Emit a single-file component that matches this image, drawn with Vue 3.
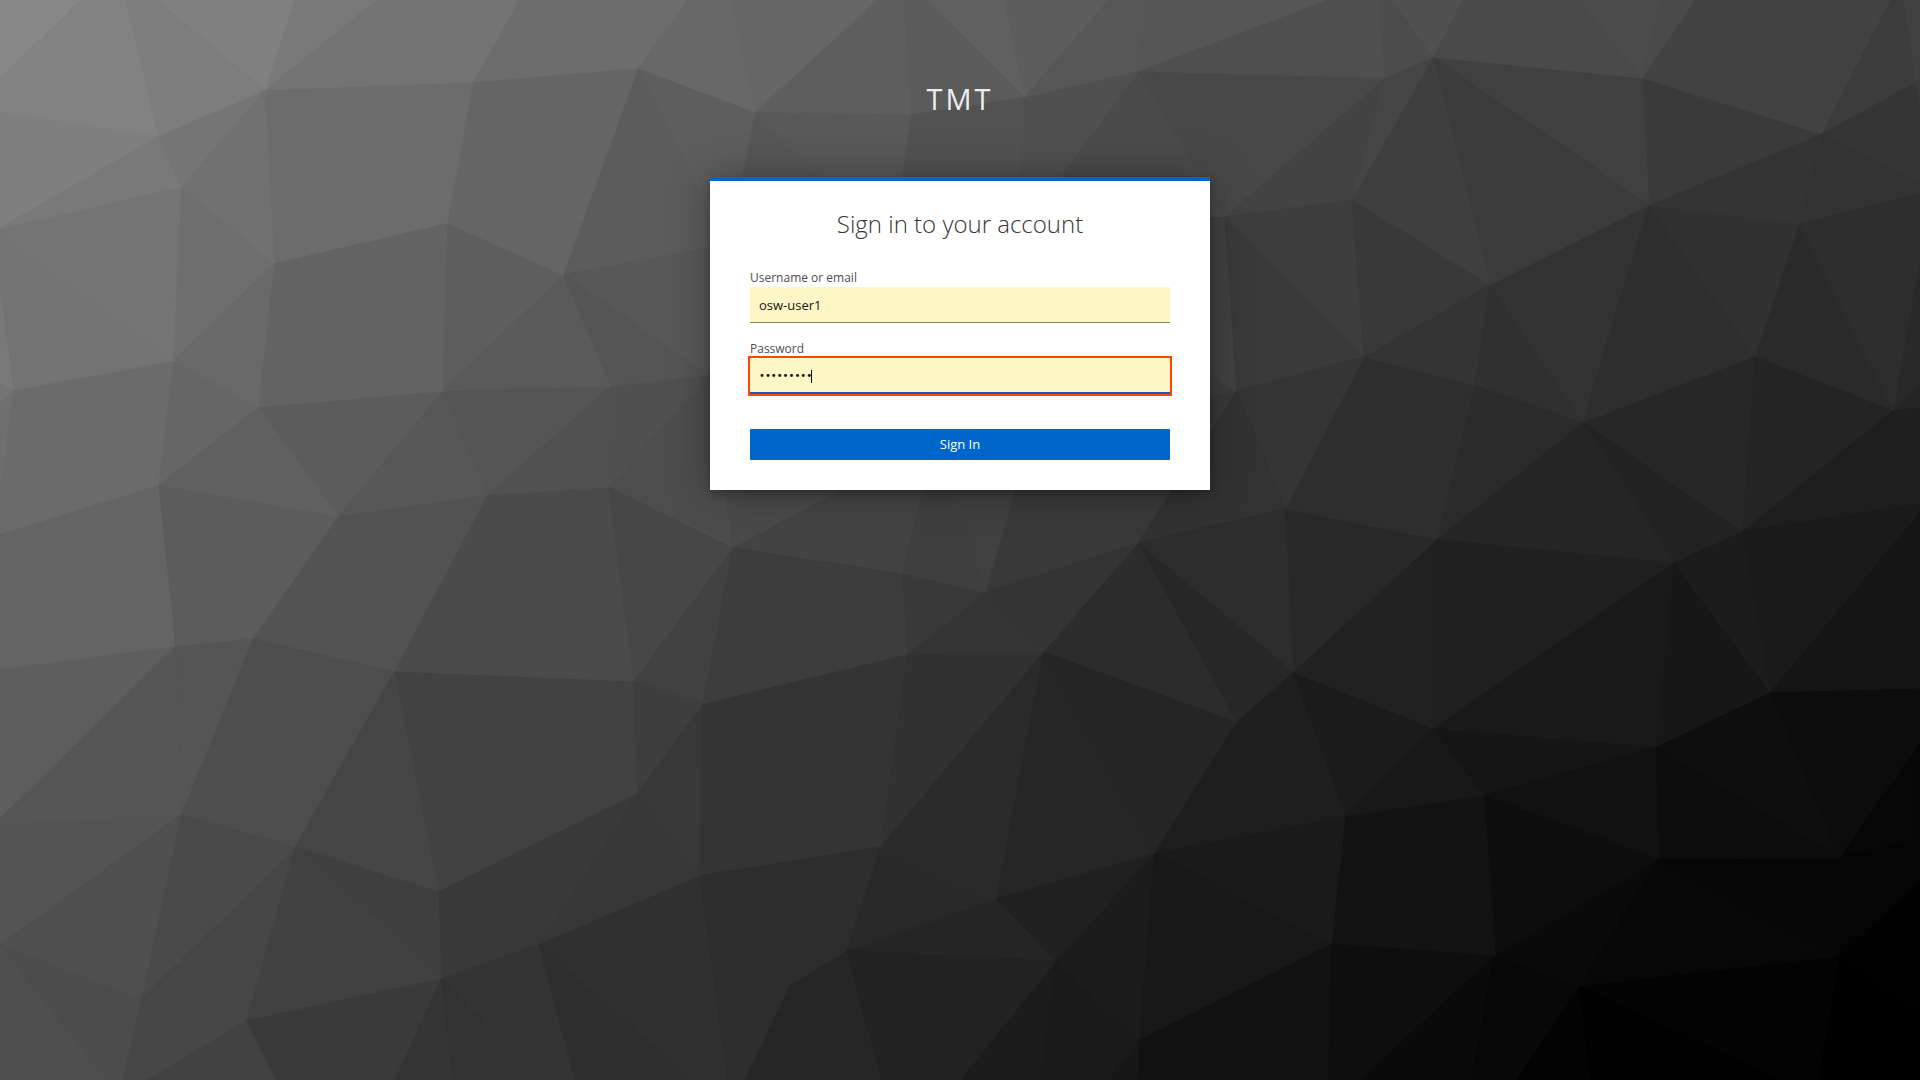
<script setup>
import { ref } from 'vue'

const username = ref('osw-user1')
const password = ref('password1')

// Inner corners of the low-poly backdrop
const nodes = {
  a: [265, 90], b: [158, 136], c: [181, 187], d: [473, 82], e: [274, 263], f: [447, 223],
  g: [563, 275], h: [638, 68], i: [14, 390], j: [173, 361], k: [258, 407], m: [442, 391],
  n: [610, 386], o: [158, 485], p: [338, 516], q: [487, 495], r: [608, 487], s: [175, 646],
  u: [253, 638], v: [394, 671], w: [633, 681], x: [181, 814], y: [295, 846], z: [438, 891],
  aa: [637, 793], ab: [141, 999], ac: [246, 1020], ad: [441, 978], ae: [538, 944],
  ag: [732, 548], ah: [699, 876], ai: [702, 704], aj: [902, 574], ak: [907, 654],
  al: [985, 593], am: [1043, 652], an: [1138, 543], ao: [1236, 722], ap: [880, 847],
  aq: [996, 898], ar: [1154, 853], as: [846, 951], at: [790, 985], au: [1056, 961],
  av: [1139, 1039],
  b1: [1293, 672], c1: [1345, 816], d1: [1331, 943], e1: [1385, 78], f1: [1433, 57],
  g1: [1642, 78], h1: [1821, 134], i1: [1352, 199], j1: [1649, 205], k1: [1490, 285],
  l1: [1799, 224], m1: [1364, 357], n1: [1475, 385], o1: [1583, 422], p1: [1755, 356],
  q1: [1893, 410], r1: [1285, 509], s1: [1437, 539], t1: [1742, 531], u1: [1915, 82],
  v1: [1674, 562], w1: [1770, 692], x1: [1433, 728], y1: [1655, 747], z1: [1484, 795],
  a2: [1659, 859], b2: [1839, 858], c2: [1495, 955], d2: [1580, 986], e2: [1839, 956],
  f2: [755, 112], g2: [911, 114], h2: [1024, 97], i2: [1138, 71], j2: [1225, 216],
  k2: [1237, 391],
  h3: [727, 245], i3: [890, 250], j3: [1019, 233], k3: [1100, 300], l3: [1033, 430],
  m3: [936, 439], n3: [709, 375],
}

// Each facet: its corners and its grey level. T, R, B and L name a point on an outer edge.
const facets = [
  ['T0 T81 L77', 0x88], ['T81 T125 b L112 L77', 0x82], ['T125 T156 a b', 0x7d],
  ['T156 T294 a', 0x80], ['T294 T376 a', 0x79], ['T376 T519 d a', 0x73],
  ['T519 T687 h d', 0x6d], ['L112 b L227', 0x7f], ['L227 b c L229', 0x79],
  ['b a c', 0x75], ['c a e', 0x71], ['a d f e', 0x6c], ['d h g f', 0x65],
  ['L229 c j L237', 0x74], ['L237 j i L284', 0x73], ['L284 i L383', 0x79],
  ['L383 i L402', 0x74], ['L402 i L487', 0x6f], ['c e j', 0x6e], ['j e k', 0x69],
  ['e f m k', 0x63], ['f g m', 0x5e], ['g n m', 0x5a], ['g n3 n', 0x55],
  ['g h3 n3', 0x58], ['i j o L534 L487', 0x6b], ['j k o', 0x66], ['o k p', 0x60],
  ['k m p', 0x5c], ['m q p', 0x57], ['m n q', 0x55], ['n r q', 0x51], ['n n3 r', 0x50],
  ['L534 o s L669', 0x64], ['o p u s', 0x5c], ['p v u', 0x53], ['p q v', 0x52],
  ['q r w v', 0x4b], ['r ag w', 0x47], ['L669 s L818', 0x5e], ['L818 s x L825', 0x56],
  ['s u x', 0x55], ['u y x', 0x4e], ['u v y', 0x4d], ['v z y', 0x45], ['v w aa', 0x42],
  ['v aa z', 0x41], ['w ai aa', 0x3e], ['w ag ai', 0x41], ['L825 x L944', 0x54],
  ['L944 x ab', 0x4f], ['x y ab', 0x4a], ['y ac ab', 0x46], ['y ad ac', 0x41],
  ['y z ad', 0x3f], ['z aa ae ad', 0x39], ['aa ah ae', 0x37], ['aa ai ah', 0x38],
  ['L944 ab B122 B107', 0x4c], ['L944 B107 B0', 0x4e], ['ab ac B146 B122', 0x47],
  ['ac B276 B146', 0x41], ['ac ad B394 B276', 0x3a], ['ad B452 B394', 0x35],
  ['ad B545 B452', 0x32], ['ad ae B574 B545', 0x34], ['ae B692 B574', 0x2e],
  ['ae ah B727 B692', 0x30], ['ah ap as at B744 B727', 0x2d], ['at as B881 B744', 0x26],
  ['as au B960 B881', 0x22], ['ag aj ak ai', 0x3d], ['ai ak ap ah', 0x34],
  ['aj al ak', 0x39], ['ak al am', 0x35], ['al an am', 0x34], ['ak am ap', 0x31],
  ['am aq ap', 0x2a], ['ap aq as', 0x29], ['am ar aq', 0x26], ['am ao ar', 0x25],
  ['an ao am', 0x2c], ['an b1 ao', 0x27], ['ao b1 c1', 0x1f], ['ao c1 ar', 0x1e],
  ['aq ar au', 0x20], ['aq au as', 0x25], ['ar av au', 0x1c], ['ar c1 d1', 0x1a],
  ['ar d1 av', 0x18], ['au B1040 B960', 0x1c], ['au av B1109 B1040', 0x1a],
  ['av B1138 B1109', 0x17], ['av d1 B1328 B1138', 0x12], ['an r1 b1', 0x2d],
  ['k2 r1 an', 0x32], ['k2 m1 r1', 0x35],
  ['T1147 T1327 i2', 0x56], ['T1327 T1379 e1 i2', 0x4f], ['T1379 T1391 f1 e1', 0x4c],
  ['T1391 T1462 f1', 0x50], ['T1462 T1577 g1 f1', 0x4a], ['T1577 T1660 g1', 0x4c],
  ['T1660 T1695 g1', 0x4a], ['T1695 T1890 h1 g1', 0x42], ['T1890 T1903 u1 h1', 0x3c],
  ['T1903 T1920 R78 u1', 0x40], ['u1 R78 R106', 0x3b], ['h1 u1 R106 R182', 0x35],
  ['h1 R182 R193 l1', 0x32], ['l1 R193 R262 q1', 0x2d], ['q1 R262 R384', 0x29],
  ['q1 R384 R407', 0x25], ['q1 R407 R486', 0x1f], ['i2 e1 j2', 0x48], ['e1 i1 j2', 0x43],
  ['e1 f1 i1', 0x45], ['f1 k1 i1', 0x3f], ['f1 j1 k1', 0x3b], ['f1 g1 j1', 0x40],
  ['g1 h1 j1', 0x3a], ['j1 h1 l1', 0x34], ['j1 l1 p1', 0x31], ['j1 p1 o1', 0x2e],
  ['l1 q1 p1', 0x2a], ['k1 j1 o1', 0x32], ['k1 o1 n1', 0x30], ['m1 k1 n1', 0x34],
  ['i1 k1 m1', 0x39], ['j2 i1 m1', 0x3e], ['j2 m1 k2', 0x3a], ['m1 n1 s1 r1', 0x2e],
  ['n1 o1 s1', 0x2b], ['o1 p1 t1', 0x27], ['p1 q1 t1', 0x24], ['t1 q1 R486 R503', 0x1e],
  ['r1 s1 b1', 0x28], ['s1 o1 v1', 0x25], ['o1 t1 v1', 0x22], ['t1 w1 v1', 0x1c],
  ['t1 R503 R511 w1', 0x1a], ['w1 R511 R688', 0x15], ['s1 v1 x1', 0x20],
  ['s1 x1 b1', 0x21], ['v1 y1 x1', 0x19], ['v1 w1 y1', 0x17], ['x1 y1 z1', 0x15],
  ['x1 z1 c1', 0x18], ['b1 x1 c1', 0x1b], ['c1 z1 c2 d1', 0x13], ['z1 y1 a2', 0x11],
  ['z1 a2 c2', 0x0d], ['y1 b2 a2', 0x0c], ['y1 w1 b2', 0x0e], ['w1 R688 R742 b2', 0x0c],
  ['b2 R742 R838', 0x07], ['b2 R838 R880 e2', 0x04], ['a2 b2 e2', 0x06],
  ['a2 e2 d2', 0x07], ['a2 d2 c2', 0x0a], ['d2 e2 B1818 B1782', 0x03],
  ['d2 B1782 B1591', 0x01], ['e2 R880 R1015', 0x01], ['e2 R1015 B1920 B1818', 0x00],
  ['c2 d2 B1516 B1472', 0x08], ['c2 B1472 B1361', 0x0a], ['d1 c2 B1361 B1328', 0x0e],
  ['d2 B1591 B1516', 0x03],
  ['T687 T732 f2 h', 0x68], ['T732 T877 f2', 0x66], ['T877 T904 g2 f2', 0x5e],
  ['T904 T926 h2 g2', 0x5b], ['T926 T1004 h2', 0x60], ['T1004 T1108 h2', 0x5d],
  ['T1108 T1147 i2 h2', 0x57], ['h f2 h3', 0x5e], ['h h3 g', 0x5c], ['f2 g2 i3', 0x59],
  ['f2 i3 h3', 0x57], ['g2 h2 j3 i3', 0x52], ['h2 i2 j3', 0x50], ['i2 j2 j3', 0x4b],
  ['j3 j2 k2 k3', 0x41], ['k3 k2 l3', 0x3d], ['n3 ag r', 0x4d], ['n3 m3 ag', 0x49],
  ['ag m3 aj', 0x43], ['m3 al aj', 0x3f], ['m3 l3 al', 0x40], ['l3 k2 an al', 0x39],
]

const edges = {
  T: (n) => [n, 0],
  B: (n) => [n, 1080],
  L: (n) => [0, n],
  R: (n) => [1920, n],
}

function locate(name) {
  return nodes[name] ?? edges[name[0]](Number(name.slice(1)))
}

// Painted from the last to the first, so that each facet's hairline covers the seam below it
const polygons = facets
  .map(([corners, level]) => ({
    points: corners.split(' ').map((name) => locate(name).join(',')).join(' '),
    color: `rgb(${level}, ${level}, ${level})`,
  }))
  .reverse()
</script>

<template>
  <div class="page">
    <svg class="backdrop" viewBox="0 0 1920 1080" preserveAspectRatio="xMidYMid slice" aria-hidden="true">
      <rect width="1920" height="1080" fill="#444" />
      <polygon
        v-for="(shape, index) in polygons"
        :key="index"
        :points="shape.points"
        :fill="shape.color"
        :stroke="shape.color"
        stroke-linejoin="round"
      />
    </svg>

    <header class="brand">TMT</header>

    <main class="card">
      <h1 class="title">Sign in to your account</h1>
      <form class="form" @submit.prevent>
        <div class="group">
          <label class="label" for="username">Username or email</label>
          <input id="username" v-model="username" class="input" type="text" autocomplete="off" />
        </div>
        <div class="group">
          <label class="label" for="password">Password</label>
          <div class="field">
            <input id="password" v-model="password" class="input active" type="password" autocomplete="off" />
            <span class="caret"></span>
          </div>
        </div>
        <button class="submit" type="submit">Sign In</button>
      </form>
    </main>
  </div>
</template>

<style>
body {
  margin: 0;
  background: #444;
}
</style>

<style scoped>
.page {
  position: relative;
  display: flex;
  flex-direction: column;
  align-items: center;
  box-sizing: border-box;
  min-height: 100vh;
  padding: 80px 16px 40px;
  font-family: "Open Sans", "Noto Sans", sans-serif;
}

.backdrop {
  position: absolute;
  inset: 0;
  width: 100%;
  height: 100%;
}

.brand {
  position: relative;
  margin-bottom: 59px;
  color: #ededed;
  font-size: 29px;
  line-height: 38px;
  letter-spacing: 3px;
}

.card {
  position: relative;
  box-sizing: border-box;
  width: 100%;
  max-width: 500px;
  padding: 24px 40px 30px;
  border-top: 4px solid #06c;
  background: #fff;
  box-shadow: 0 4px 8px rgba(3, 3, 3, 0.24), 0 0 40px rgba(3, 3, 3, 0.3);
}

.title {
  margin: 0 0 26px;
  color: #363636;
  font-size: 24px;
  font-weight: 300;
  line-height: 38px;
  text-align: center;
}

.form {
  display: flex;
  flex-direction: column;
}

.group {
  display: flex;
  flex-direction: column;
  margin-bottom: 17px;
}

.label {
  color: #4d4d4d;
  font-size: 12px;
  line-height: 18px;
}

.field {
  position: relative;
  display: flex;
}

.input {
  box-sizing: border-box;
  width: 100%;
  height: 36px;
  padding: 0 9px;
  border: 0;
  border-bottom: 1px solid #8c8460;
  border-radius: 0;
  outline: 0;
  background: #fff6c5;
  color: #151515;
  font-family: "Open Sans", "Noto Sans", sans-serif;
  font-size: 13px;
}

.active {
  border-bottom: 2px solid #1f58b8;
  outline: 2px solid #ff4500;
  font-family: "DejaVu Sans", sans-serif;
  font-size: 10px;
}

.caret {
  position: absolute;
  top: 12px;
  left: 61px;
  width: 1px;
  height: 13px;
  background: #000;
}

.submit {
  height: 31px;
  margin-top: 18px;
  padding: 0 0 2px;
  border: 0;
  border-radius: 1px;
  background: #06c;
  color: #fff;
  font-family: "Open Sans", "Noto Sans", sans-serif;
  font-size: 13px;
}
</style>
